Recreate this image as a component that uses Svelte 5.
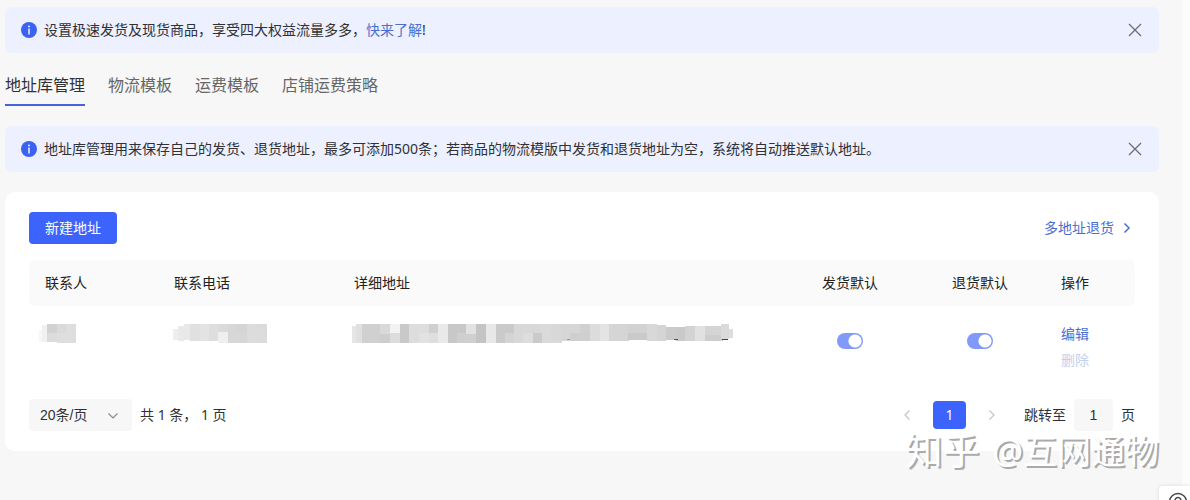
<script lang="ts">
  type Block = [x: number, y: number, width: number, height: number, color: string]

  const tabs = ['地址库管理', '物流模板', '运费模板', '店铺运费策略']
  let active = $state(0)
  let showPromo = $state(true)
  let showTip = $state(true)
  let jump = $state('1')

  // hidden personal data, drawn as mosaic blocks
  const contact: Block[] = [
    [0, 7, 4, 12, '#f7f7f7'],
    [3, 2, 6, 17, '#f1f1f1'],
    [8, 1, 10, 9, '#d2d2d2'],
    [8, 10, 10, 9, '#dcdcdc'],
    [18, 1, 19, 19, '#dedede'],
    [18, 1, 9, 9, '#dadada'],
  ]

  const phone: Block[] = [
    [5, 6, 6, 11, '#eeeeee'],
    [10, 3, 6, 15, '#e9e9e9'],
    [16, 1, 10, 16, '#e8e8e8'],
    [22, 1, 10, 17, '#e0e0e0'],
    [32, 1, 9, 17, '#e3e3e3'],
    [41, 1, 10, 17, '#dedede'],
    [51, 1, 9, 8, '#dadada'],
    [50, 9, 10, 11, '#efefef'],
    [60, 1, 19, 19, '#d7d7d7'],
    [69, 1, 10, 9, '#d5d5d5'],
    [79, 1, 10, 19, '#dddcdb'],
    [89, 1, 10, 19, '#dbdbdb'],
  ]

  const address: Block[] = [
    [4, 3, 10, 17, '#e6e6e6'],
    [8, 1, 6, 19, '#e0e0e0'],
    [14, 1, 18, 19, '#d1d0d1'],
    [32, 1, 10, 10, '#d9d9d9'],
    [32, 11, 10, 9, '#cecece'],
    [42, 1, 10, 9, '#f2f2f2'],
    [42, 10, 10, 10, '#dcdcdc'],
    [52, 1, 9, 19, '#c9c9c9'],
    [61, 1, 20, 19, '#dddddd'],
    [71, 10, 10, 10, '#e2e2e2'],
    [81, 1, 9, 9, '#cfcfcf'],
    [81, 10, 9, 10, '#dedede'],
    [90, 1, 10, 19, '#e9e9e9'],
    [100, 1, 18, 19, '#c9c8c9'],
    [109, 10, 19, 10, '#d0cfcf'],
    [118, 1, 10, 10, '#e2e2e2'],
    [128, 1, 10, 19, '#c4c4c4'],
    [138, 1, 10, 19, '#e8e8e8'],
    [148, 1, 18, 19, '#cacaca'],
    [157, 10, 9, 10, '#d4d4d4'],
    [166, 1, 28, 19, '#d8d8d8'],
    [175, 10, 10, 10, '#dddddd'],
    [185, 10, 10, 10, '#cacaca'],
    [194, 1, 20, 19, '#dadada'],
    [203, 1, 10, 17, '#d8d8d8'],
    [213, 1, 19, 17, '#d6d6d6'],
    [222, 10, 20, 8, '#cfcfcf'],
    [232, 1, 10, 9, '#d0d0d0'],
    [242, 1, 10, 17, '#dcdcdc'],
    [252, 1, 9, 17, '#e4e4e4'],
    [261, 1, 20, 17, '#d5d5d5'],
    [280, 1, 20, 9, '#d2d2d2'],
    [280, 10, 20, 7, '#cacaca'],
    [299, 1, 10, 17, '#d8d8d8'],
    [309, 2, 9, 16, '#d4d4d4'],
    [318, 4, 10, 13, '#cbcbcb'],
    [328, 4, 9, 14, '#c9c9c9'],
    [337, 3, 10, 15, '#d3d3d3'],
    [347, 3, 10, 15, '#e1e1e1'],
    [357, 3, 18, 9, '#d4d4d4'],
    [357, 12, 18, 6, '#cdcdcd'],
    [373, 1, 8, 15, '#dadada'],
    [381, 6, 4, 9, '#dddddd'],
    [326, 16, 4, 1, '#555555'],
    [219, 16, 3, 1, '#999999'],
    [374, 16, 6, 1, '#444444'],
  ]
</script>

{#snippet mosaic(blocks: Block[], label: string)}
  <svg class="mosaic" role="img" aria-label={label}>
    {#each blocks as [x, y, width, height, fill]}
      <rect {x} {y} {width} {height} {fill} />
    {/each}
  </svg>
{/snippet}

{#snippet info()}
  <svg class="info" viewBox="0 0 16 16" aria-hidden="true">
    <circle cx="8" cy="8" r="8" fill="#3b62f0" />
    <rect x="7.3" y="6.5" width="1.4" height="6" fill="#fff" />
    <circle cx="8" cy="4.4" r="0.9" fill="#fff" />
  </svg>
{/snippet}

{#snippet cross()}
  <svg width="14" height="14" viewBox="0 0 14 14" aria-hidden="true">
    <path d="M1 1l12 12M13 1L1 13" fill="none" stroke="#6a6c7c" stroke-width="1.3" />
  </svg>
{/snippet}

<div class="page">
  <main>
    {#if showPromo}
      <div class="banner">
        {@render info()}
        <p>设置极速发货及现货商品&#xFF0C;享受四大权益流量多多&#xFF0C;<a href="#learn">快来了解</a>!</p>
        <button class="close" aria-label="关闭" onclick={() => (showPromo = false)}>
          {@render cross()}
        </button>
      </div>
    {/if}

    <nav>
      {#each tabs as tab, i}
        <button class="tab" class:active={active === i} onclick={() => (active = i)}>{tab}</button>
      {/each}
    </nav>

    {#if showTip}
      <div class="banner">
        {@render info()}
        <p>地址库管理用来保存自己的发货、退货地址&#xFF0C;最多可添加500条&#xFF1B;若商品的物流模版中发货和退货地址为空&#xFF0C;系统将自动推送默认地址。</p>
        <button class="close" aria-label="关闭" onclick={() => (showTip = false)}>
          {@render cross()}
        </button>
      </div>
    {/if}

    <section class="card">
      <div class="toolbar">
        <button class="primary">新建地址</button>
        <a class="more" href="#returns">
          多地址退货
          <svg width="8" height="12" viewBox="0 0 8 12" aria-hidden="true">
            <path d="M1.5 1.5L6 6l-4.5 4.5" fill="none" stroke="currentColor" stroke-width="1.5" />
          </svg>
        </a>
      </div>

      <table>
        <thead>
          <tr>
            <th class="contact">联系人</th>
            <th class="phone">联系电话</th>
            <th>详细地址</th>
            <th class="default">发货默认</th>
            <th class="default">退货默认</th>
            <th class="actions">操作</th>
          </tr>
        </thead>
        <tbody>
          <tr>
            <td class="hidden-text">{@render mosaic(contact, '联系人')}</td>
            <td class="hidden-text">{@render mosaic(phone, '联系电话')}</td>
            <td class="hidden-text">{@render mosaic(address, '详细地址')}</td>
            <td class="default"><input class="switch" type="checkbox" aria-label="发货默认" checked /></td>
            <td class="default"><input class="switch" type="checkbox" aria-label="退货默认" checked /></td>
            <td class="actions">
              <button class="text">编辑</button>
              <button class="text" disabled>删除</button>
            </td>
          </tr>
        </tbody>
      </table>

      <footer>
        <div class="select">
          <select aria-label="每页条数">
            <option>20条/页</option>
            <option>50条/页</option>
          </select>
          <svg width="12" height="8" viewBox="0 0 12 8" aria-hidden="true">
            <path d="M1.5 1.5L6 6l4.5-4.5" fill="none" stroke="#888" stroke-width="1.1" />
          </svg>
        </div>
        <span class="total">共 1 条&#xFF0C; 1 页</span>
        <div class="pager">
          <button class="arrow" aria-label="上一页" disabled>
            <svg width="8" height="12" viewBox="0 0 8 12" aria-hidden="true">
              <path d="M6.5 1.5L2 6l4.5 4.5" fill="none" stroke="#c4c4c4" stroke-width="1.2" />
            </svg>
          </button>
          <button class="current">1</button>
          <button class="arrow" aria-label="下一页" disabled>
            <svg width="8" height="12" viewBox="0 0 8 12" aria-hidden="true">
              <path d="M1.5 1.5L6 6l-4.5 4.5" fill="none" stroke="#c4c4c4" stroke-width="1.2" />
            </svg>
          </button>
        </div>
        <label class="jump">
          跳转至
          <input type="text" bind:value={jump} />
          页
        </label>
      </footer>
    </section>
  </main>

  <div class="watermark"><span>知乎</span> @互网通物</div>

  <button class="help" aria-label="帮助">
    <svg width="20" height="20" viewBox="0 0 20 20" aria-hidden="true">
      <circle cx="10" cy="10" r="8.5" fill="none" stroke="#444" stroke-width="1.4" />
      <path d="M7 8.5a3 3 0 1 1 4.5 2.6c-1 .6-1.5 1-1.5 2.1" fill="none" stroke="#444" stroke-width="1.4" />
      <circle cx="10" cy="15" r="0.9" fill="#444" />
    </svg>
  </button>
</div>

<style>
  :global(body) {
    background: #f7f7f7;
  }

  .page {
    position: relative;
    box-sizing: border-box;
    min-height: 100vh;
    padding: 7px 31px 0 5px;
    background: linear-gradient(to left, #fcfcfc 8px, #f7f7f7 8px);
    overflow: hidden;
    font: 14px/22px 'Noto Sans', 'Noto Sans CJK SC', sans-serif;
    color: #2f3136;
  }

  button,
  input,
  select {
    margin: 0;
    padding: 0;
    border: 0;
    background: none;
    font: inherit;
    color: inherit;
  }

  button {
    cursor: pointer;
  }

  button:disabled {
    cursor: default;
  }

  a {
    color: #4a6fd0;
    text-decoration: none;
  }

  svg {
    display: block;
  }

  .banner {
    display: flex;
    align-items: center;
    gap: 7px;
    height: 46px;
    padding: 0 16px;
    border-radius: 6px;
    background: #edf0ff;
  }

  .banner p {
    flex: 1;
    margin: 0;
    white-space: nowrap;
  }

  .info {
    width: 16px;
    height: 16px;
  }

  .close {
    padding: 1px;
  }

  nav {
    display: flex;
    gap: 23px;
    height: 53px;
    margin-bottom: 20px;
  }

  .tab {
    padding-top: 12px;
    border-bottom: 2px solid transparent;
    font-size: 16px;
    line-height: 24px;
    color: #666;
  }

  .tab.active {
    border-color: #4465d8;
    color: #2f3136;
  }

  .card {
    margin-top: 20px;
    padding: 20px 24px;
    border-radius: 10px;
    background: #fff;
  }

  .toolbar {
    display: flex;
    justify-content: space-between;
    align-items: center;
    margin-bottom: 16px;
  }

  .primary {
    height: 32px;
    padding: 0 16px;
    border-radius: 4px;
    background: #3c64fc;
    color: #fff;
  }

  .more {
    display: flex;
    align-items: center;
    gap: 9px;
    padding-right: 4px;
  }

  table {
    width: 100%;
    table-layout: fixed;
    border-collapse: separate;
    border-spacing: 0;
  }

  th {
    box-sizing: border-box;
    height: 46px;
    padding: 0 16px;
    background: #fafafa;
    font-weight: normal;
    text-align: left;
    color: #222;
  }

  th:first-child {
    border-radius: 6px 0 0 6px;
  }

  th:last-child {
    border-radius: 0 6px 6px 0;
  }

  .contact {
    width: 129px;
  }

  .phone {
    width: 180px;
  }

  .default {
    width: 130px;
    text-align: center;
  }

  .actions {
    width: 90px;
  }

  td {
    padding: 15px 16px 0;
    vertical-align: top;
  }

  td.hidden-text {
    padding: 17px 0 0 10px;
  }

  td.default {
    box-sizing: border-box;
    padding-top: 27px;
  }

  .mosaic {
    width: 100%;
    height: 20px;
  }

  .switch {
    display: block;
    width: 26px;
    height: 16px;
    margin: 0 auto;
    border-radius: 8px;
    background: radial-gradient(circle at 8px 8px, #fff 6px, #ccc 7px);
    appearance: none;
  }

  .switch:checked {
    background: radial-gradient(circle at 18px 8px, #fff 6px, #8199fb 7px);
  }

  .text {
    display: block;
    line-height: 26px;
    color: #4a6fd0;
  }

  .text:disabled {
    color: #c3d0ee;
  }

  footer {
    display: flex;
    align-items: center;
    gap: 8px;
    margin-top: 26px;
  }

  .select {
    position: relative;
  }

  .select select {
    width: 103px;
    height: 32px;
    padding: 0 11px;
    border-radius: 4px;
    background: #f7f7f7;
    font-family: 'Liberation Sans', 'Noto Sans CJK SC', sans-serif;
    appearance: none;
  }

  .select svg {
    position: absolute;
    top: 13px;
    right: 13px;
    pointer-events: none;
  }

  .total {
    flex: 1;
  }

  .pager {
    display: flex;
    align-items: center;
    gap: 12px;
    margin-right: 10px;
  }

  .arrow {
    display: flex;
    justify-content: center;
    width: 28px;
  }

  .current {
    width: 33px;
    height: 28px;
    border-radius: 4px;
    background: #3c64fc;
    color: #fff;
  }

  .jump {
    display: flex;
    align-items: center;
    gap: 8px;
  }

  .jump input {
    width: 39px;
    height: 32px;
    border-radius: 4px;
    background: #f7f7f7;
    font-family: 'Liberation Sans', sans-serif;
    text-align: center;
  }

  .watermark {
    display: flex;
    align-items: center;
    gap: 13px;
    position: absolute;
    right: 31px;
    bottom: 29px;
    font-size: 34px;
    line-height: 40px;
    color: #fff;
    text-shadow: 2px 2px 0 #aaa;
    white-space: nowrap;
    pointer-events: none;
  }

  .watermark span {
    font-size: 37px;
  }

  .help {
    position: absolute;
    right: 0;
    bottom: -26px;
    width: 31px;
    height: 40px;
    padding: 0 2px 8px 9px;
    border-radius: 4px 0 0 4px;
    background: #fff;
    box-shadow: 0 0 4px rgba(0, 0, 0, 0.12);
  }
</style>
